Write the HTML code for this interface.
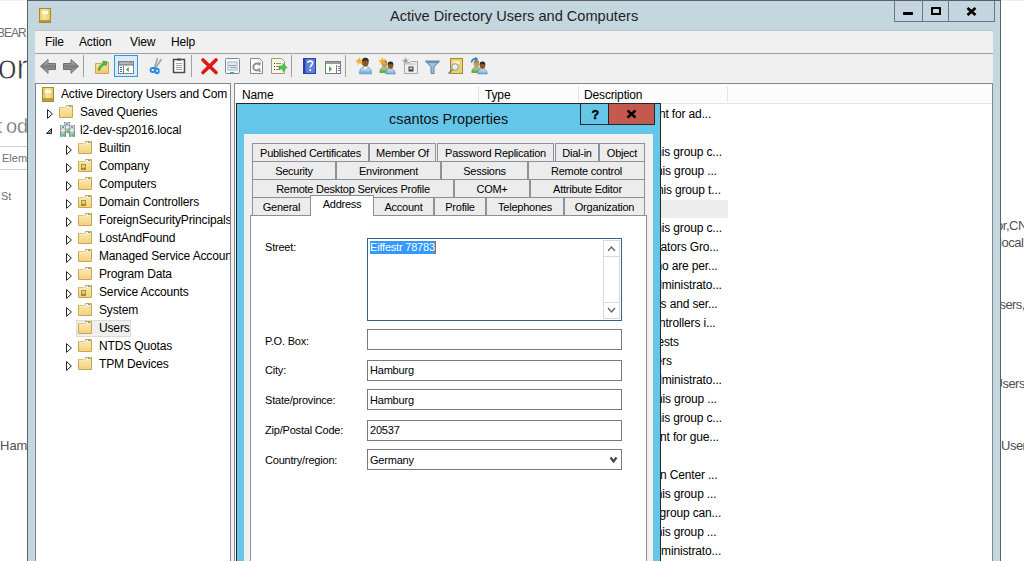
<!DOCTYPE html>
<html><head><meta charset="utf-8">
<style>
*{margin:0;padding:0;box-sizing:border-box}
html,body{width:1024px;height:561px;overflow:hidden;background:#fff;position:relative;font-family:"Liberation Sans",sans-serif}
.a{position:absolute}
.t{position:absolute;white-space:nowrap;line-height:1}
.tr{font-size:12px;color:#000;letter-spacing:-0.15px}
.dl{font-size:11px;color:#000;letter-spacing:-0.2px}
.tab{position:absolute;height:19px;background:#ececec;border:1px solid #8e9197;font-size:11px;letter-spacing:-0.25px;text-align:center;line-height:18px;color:#000}
.box{position:absolute;background:#fff;border:1px solid #7a7a7a}
.tri{position:absolute;width:0;height:0;border-top:4px solid transparent;border-bottom:4px solid transparent;border-left:5px solid #595959}
.tri:after{content:"";position:absolute;left:-4px;top:-2.5px;border-top:2.5px solid transparent;border-bottom:2.5px solid transparent;border-left:3px solid #fff}
.fold{position:absolute;width:14px;height:12px;background:linear-gradient(#fbe7a6,#f0cf73);border:1px solid #d3b05a;border-radius:1px}
.fold:before{content:"";position:absolute;left:-1px;top:-3px;width:6px;height:3px;background:#f3d98b;border:1px solid #d3b05a;border-bottom:none;border-radius:1px 1px 0 0}
</style></head><body>

<!-- background desktop app fragments -->
<div class="a" style="left:0;top:0;width:27px;height:1px;background:#f0f0f0"></div>
<div class="a" style="left:1001px;top:0;width:23px;height:1px;background:#eeeeee"></div>
<div class="t" style="left:-3px;top:27px;font-size:12px;letter-spacing:-1px;color:#6d6d6d">BEAR</div>
<div class="t" style="left:-2.5px;top:49px;font-size:35px;letter-spacing:-0.8px;color:#333;-webkit-text-stroke:0.9px #fff">or</div>
<div class="t" style="left:-3.5px;top:116px;font-size:20px;color:#1e73c8;-webkit-text-stroke:0.35px #fff">t</div>
<div class="t" style="left:6px;top:116px;font-size:20px;color:#666;-webkit-text-stroke:0.35px #fff">od</div>
<div class="a" style="left:0;top:146px;width:27px;height:1px;background:#cfcfcf"></div>
<div class="a" style="left:0;top:169px;width:27px;height:1px;background:#cfcfcf"></div>
<div class="t" style="left:2px;top:153px;font-size:11px;color:#707070">Elem</div>
<div class="t" style="left:1px;top:191px;font-size:11px;color:#707070">St</div>
<div class="t" style="left:0;top:439px;font-size:13px;color:#505050">Ham</div>
<div class="t" style="left:996.1px;top:219px;font-size:13px;letter-spacing:-0.5px;color:#505050">or,CN</div>
<div class="t" style="left:999.1px;top:236px;font-size:13px;letter-spacing:-0.5px;color:#505050">local</div>
<div class="t" style="left:990.8px;top:298px;font-size:13px;letter-spacing:-0.6px;color:#505050">Users,</div>
<div class="t" style="left:993.5px;top:377px;font-size:13px;letter-spacing:-0.5px;color:#505050">Users</div>
<div class="t" style="left:1001px;top:439px;font-size:13px;letter-spacing:-0.5px;color:#505050">User</div>

<!-- main window -->
<div class="a" style="left:27px;top:0;width:974px;height:561px;background:#c4d6de;border:1px solid #596168;border-bottom:none"></div>
<!-- title icon -->
<div class="a" style="left:39px;top:8px;width:12px;height:15px;background:linear-gradient(90deg,#e9cf63,#f7e8a3 50%,#e6c85a);border:1px solid #a88a2a"></div>
<div class="a" style="left:42px;top:11px;width:6px;height:3px;background:#fffbe0"></div>
<div class="a" style="left:40px;top:20px;width:10px;height:2px;background:#b89a3a"></div>
<div class="t" style="left:390px;top:9px;font-size:14.6px;color:#1f1f1f">Active Directory Users and Computers</div>
<!-- window buttons -->
<div class="a" style="left:894px;top:1px;width:101px;height:21px;border:1px solid #6b7780;border-top:none;background:#c3d5de"></div>
<div class="a" style="left:922px;top:0;width:1px;height:21px;background:#6b7780"></div>
<div class="a" style="left:948px;top:0;width:1px;height:21px;background:#6b7780"></div>
<div class="a" style="left:903px;top:12px;width:10px;height:3px;background:#000"></div>
<div class="a" style="left:931px;top:7px;width:10px;height:8px;border:2px solid #000;border-top-width:2px"></div>
<svg class="a" style="left:966px;top:7px" width="11" height="9"><path d="M1.5,1 L9.5,8 M9.5,1 L1.5,8" stroke="#000" stroke-width="2.7"/></svg>

<!-- menu bar -->
<div class="a" style="left:35px;top:30px;width:958px;height:24px;background:#f0f0f0;border-top:1px solid #b9c3c8;border-bottom:1px solid #a0a0a0"></div>
<div class="t tr" style="left:45px;top:36px">File</div>
<div class="t tr" style="left:79px;top:36px">Action</div>
<div class="t tr" style="left:130px;top:36px">View</div>
<div class="t tr" style="left:171px;top:36px">Help</div>

<!-- toolbar -->
<div class="a" style="left:35px;top:54px;width:958px;height:30px;background:#f0f0f0;border-bottom:1px solid #7a7a7a"></div>


<!-- toolbar icons -->
<div class="a" style="left:114px;top:55px;width:24px;height:22px;background:#dcebfb;border:1px solid #2a9de0"></div>
<svg class="a" style="left:0;top:0" width="500" height="84" viewBox="0 0 500 84">
<defs>
<linearGradient id="ga" x1="0" y1="0" x2="0" y2="1"><stop offset="0" stop-color="#c8c8c8"/><stop offset="0.5" stop-color="#7a7a7a"/><stop offset="1" stop-color="#b0b0b0"/></linearGradient>
<linearGradient id="gf" x1="0" y1="0" x2="0" y2="1"><stop offset="0" stop-color="#fbe6a4"/><stop offset="1" stop-color="#edc96a"/></linearGradient>
<linearGradient id="gp" x1="0" y1="0" x2="0" y2="1"><stop offset="0" stop-color="#d3e8f8"/><stop offset="1" stop-color="#6ea6d6"/></linearGradient>
<linearGradient id="gg" x1="0" y1="0" x2="0" y2="1"><stop offset="0" stop-color="#b4dc9c"/><stop offset="1" stop-color="#5a9e3a"/></linearGradient>
</defs>
<!-- separators -->
<rect x="83" y="55" width="1" height="22" fill="#a0a0a0"/>
<rect x="191" y="55" width="1" height="22" fill="#a0a0a0"/>
<rect x="291" y="55" width="1" height="22" fill="#a0a0a0"/>
<rect x="345" y="55" width="1" height="22" fill="#a0a0a0"/>
<!-- back/forward -->
<path d="M40.5,66.2 L48,59.5 V63.5 H55.5 V69.5 H48 V73.3 Z" fill="url(#ga)" stroke="#6e6e6e" stroke-width="1"/>
<path d="M78.5,66.2 L71,59.5 V63.5 H63.5 V69.5 H71 V73.3 Z" fill="url(#ga)" stroke="#6e6e6e" stroke-width="1"/>
<!-- up folder -->
<path d="M95.5,63.5 H101 L102,62 H108.5 V73.5 H95.5 Z" fill="url(#gf)" stroke="#cda656"/>
<path d="M98,70 C99,66 101,64 104,63 L103,61 L107,62 L106,66 L105,64.5 C102.5,65.5 100.5,67.5 99.5,70.5 Z" fill="#3fc43f" stroke="#2a9a2a" stroke-width="0.6"/>
<!-- console tree window -->
<rect x="118.5" y="61.5" width="15" height="12" fill="#fff" stroke="#7d8288"/>
<rect x="119" y="62" width="14" height="3" fill="#8a8f95"/>
<rect x="119.5" y="62.6" width="10" height="0.9" fill="#e8eaec"/>
<rect x="130.5" y="62.6" width="1" height="1" fill="#e8eaec"/><rect x="132" y="62.6" width="0.8" height="1" fill="#e8eaec"/>
<rect x="119" y="65" width="14" height="1" fill="#b8bcc0"/>
<rect x="123" y="66" width="1" height="7" fill="#7d8288"/>
<rect x="120" y="67" width="2" height="1" fill="#3a72c0"/><rect x="120" y="69" width="2" height="1" fill="#3a72c0"/><rect x="120" y="71" width="2" height="1" fill="#3a72c0"/>
<path d="M128.8,67 L126,69.5 L128.8,72 Z" fill="#3ab03a"/>
<!-- scissors -->
<path d="M157.5,58 L154.5,68 M161.5,59 L155.5,68" stroke="#9aa6b0" stroke-width="1.6"/>
<ellipse cx="153" cy="70" rx="2.5" ry="2" fill="none" stroke="#1e8ae6" stroke-width="1.8"/>
<ellipse cx="157" cy="71" rx="1.8" ry="2.3" fill="none" stroke="#1e8ae6" stroke-width="1.8"/>
<!-- clipboard -->
<rect x="173.5" y="59.5" width="11" height="13" fill="#fff" stroke="#4a4a4a" stroke-width="1.5"/>
<rect x="177" y="58.5" width="4" height="2" fill="#4a4a4a"/>
<path d="M176,63.5 H182 M176,65.5 H182 M176,67.5 H182 M176,69.5 H182" stroke="#9a9a9a" stroke-width="0.9"/>
<!-- red x -->
<path d="M203,60 L216,72.5 M216,60 L203,72.5" stroke="#e01818" stroke-width="3.6" stroke-linecap="round"/>
<!-- properties -->
<rect x="225.5" y="58.5" width="14" height="15" rx="1" fill="#f4f6f8" stroke="#7d8a96"/>
<rect x="228" y="62" width="9" height="8" fill="#e6ecf2" stroke="#9aa8b6" stroke-width="0.8"/>
<path d="M230,65.5 H236 M230,67.5 H236" stroke="#7d8a96" stroke-width="0.8"/>
<rect x="229" y="65" width="1" height="1" fill="#2a9ae6"/>
<rect x="230" y="72" width="4" height="1" fill="#2aaae6"/>
<!-- refresh page -->
<path d="M250.5,58.5 H259.5 L262.5,61.5 V73.5 H250.5 Z" fill="#fafafa" stroke="#8a8a8a"/>
<path d="M259.8,68.5 A3.4,3.4 0 1 1 258.6,64.2" fill="none" stroke="#8c8c8c" stroke-width="1.8"/><path d="M257.2,62.2 L261,62.8 L259.6,66.2 Z" fill="#8c8c8c"/><path d="M258,69.5 L260.5,72" stroke="#8c8c8c" stroke-width="1.4"/>
<!-- export list -->
<path d="M271.5,58.5 H281.5 L284.5,61.5 V73.5 H271.5 Z" fill="#fbf5dc" stroke="#9a9a8a"/>
<path d="M274,63.5 H275 M274,66.5 H275 M274,69.5 H275" stroke="#333" stroke-width="1"/>
<path d="M276,63.5 H281 M276,66.5 H280 M276,69.5 H280" stroke="#7a7ab0" stroke-width="0.9"/>
<path d="M279,66 H283 V63.5 L287,67.5 L283,71.5 V69 H279 Z" fill="#4cc84c" stroke="#2e9a2e" stroke-width="0.6"/>
<!-- help -->
<rect x="303" y="58" width="13" height="16" fill="#2445a8"/>
<rect x="305.5" y="59" width="9.5" height="14" fill="#5d7fd6"/>
<path d="M307.8,62.8 C307.8,60.6 312.6,60.4 312.6,63 C312.6,65 310.2,65.2 310.2,67.6" fill="none" stroke="#fff" stroke-width="1.6"/>
<rect x="309.4" y="69.3" width="1.7" height="1.8" fill="#fff"/>
<!-- action pane window -->
<rect x="325.5" y="61.5" width="15" height="12" fill="#fff" stroke="#7d7d7d"/>
<rect x="326" y="62" width="14" height="2" fill="#9a9a9a"/>
<rect x="336" y="65" width="1" height="8" fill="#7d7d7d"/>
<rect x="338" y="66" width="2" height="1" fill="#4a7ec8"/><rect x="338" y="68" width="2" height="1" fill="#4a7ec8"/><rect x="338" y="70" width="2" height="1" fill="#4a7ec8"/>
<path d="M329,66 L332,69 L329,72 Z" fill="#3ab03a"/>
<!-- new user -->
<path d="M359.5,73.8 C359.5,68.5 362,66.8 365.5,66.8 C369,66.8 371.5,68.5 371.5,73.8 Z" fill="url(#gp)" stroke="#5a8cbc" stroke-width="0.7"/>
<path d="M364,67 L365.5,70 L367,67 Z" fill="#fff"/>
<ellipse cx="365.3" cy="62.6" rx="3.3" ry="3.9" fill="#8a5628"/>
<path d="M361.9,62 C361.5,58.5 363.5,57.8 365.5,57.8 C368,57.8 369.2,59.5 368.7,62 C367.5,60 364,60 361.9,62 Z" fill="#2b2b2b"/>
<g transform="translate(359.3,61.2)"><path d="M0,-3.6 L0.9,-1.2 L3.4,-1.6 L1.5,0.3 L2.8,2.7 L0.3,1.6 L-1.6,3.3 L-1.3,0.8 L-3.6,-0.3 L-1.2,-1 Z" fill="#f8a81c" stroke="#f3b040" stroke-width="0.6"/></g>
<!-- new group -->
<path d="M379.8,72.5 C379.8,68.5 382,67.2 384.5,67.2 C387,67.2 389,68.5 389,72.5 Z" fill="url(#gg)" stroke="#4f8a36" stroke-width="0.6"/>
<ellipse cx="384.4" cy="64" rx="2.7" ry="3.2" fill="#c49866"/>
<path d="M381.8,63.3 C381.6,60.5 383,60 384.5,60 C386.2,60 387.3,61 387.1,63.3 C386,62 383,62 381.8,63.3 Z" fill="#a08040"/>
<path d="M385.8,74 C385.8,70 388,68.8 390.5,68.8 C393,68.8 395.2,70 395.2,74 Z" fill="url(#gp)" stroke="#5a8cbc" stroke-width="0.6"/>
<ellipse cx="390.5" cy="65.6" rx="2.8" ry="3.3" fill="#8a5628"/>
<path d="M387.7,65 C387.5,62 389,61.5 390.6,61.5 C392.4,61.5 393.5,62.5 393.3,65 C392,63.6 389,63.6 387.7,65 Z" fill="#2b2b2b"/>
<g transform="translate(382.3,61.2)"><path d="M0,-3.6 L0.9,-1.2 L3.4,-1.6 L1.5,0.3 L2.8,2.7 L0.3,1.6 L-1.6,3.3 L-1.3,0.8 L-3.6,-0.3 L-1.2,-1 Z" fill="#f8a81c" stroke="#f3b040" stroke-width="0.6"/></g>
<!-- new OU -->
<path d="M404.5,62.5 H410 L411,61.5 H417.5 V73.5 H404.5 Z" fill="#efefef" stroke="#a8a8a8"/>
<rect x="405" y="63" width="12" height="2" fill="#d8d8d8"/>
<rect x="408.5" y="66.5" width="5" height="5" fill="#3c3c3c"/>
<rect x="409.5" y="67.5" width="3" height="2" fill="#d0d0d0"/>
<g transform="translate(405.5,61)"><path d="M0,-3.4 L0.8,-1.1 L3.2,-1.5 L1.4,0.3 L2.6,2.5 L0.3,1.5 L-1.5,3.1 L-1.2,0.7 L-3.4,-0.3 L-1.1,-0.9 Z" fill="#9a9a9a" stroke="#bcbcbc" stroke-width="0.6"/></g>
<!-- filter -->
<path d="M425.5,61 H439.5 L434,67 V73.5 H431 V67 Z" fill="#9cc0da" stroke="#5a7a96" stroke-width="0.9"/>
<rect x="426" y="61" width="13" height="2" fill="#6f8fab"/>
<!-- find -->
<rect x="450.5" y="58.5" width="12" height="15" fill="#e8d078" stroke="#a88a20"/>
<rect x="453" y="61" width="7" height="3" fill="#f8eeb8"/>
<circle cx="455" cy="67" r="3.3" fill="#e4f0f8" stroke="#8a98a0" stroke-width="1"/>
<path d="M452.5,69.5 L448.5,73.5" stroke="#7a7a7a" stroke-width="1.6"/>
<!-- add to group -->
<path d="M471.5,62.5 Q472,58.8 475.8,58.8" fill="none" stroke="#1f78d4" stroke-width="1.6"/>
<path d="M475,56.8 L478.3,58.9 L475.1,61.2 Z" fill="#1f78d4"/>
<path d="M471.8,72.5 C471.8,68.5 474,67.2 476.5,67.2 C479,67.2 481,68.5 481,72.5 Z" fill="url(#gg)" stroke="#4f8a36" stroke-width="0.6"/>
<ellipse cx="476.4" cy="64" rx="2.7" ry="3.2" fill="#c49866"/>
<path d="M473.8,63.3 C473.6,60.5 475,60 476.5,60 C478.2,60 479.3,61 479.1,63.3 C478,62 475,62 473.8,63.3 Z" fill="#a08040"/>
<path d="M477.8,74 C477.8,70 480,68.8 482.5,68.8 C485,68.8 487.2,70 487.2,74 Z" fill="url(#gp)" stroke="#5a8cbc" stroke-width="0.6"/>
<ellipse cx="482.5" cy="65.6" rx="2.8" ry="3.3" fill="#8a5628"/>
<path d="M479.7,65 C479.5,62 481,61.5 482.6,61.5 C484.4,61.5 485.5,62.5 485.3,65 C484,63.6 481,63.6 479.7,65 Z" fill="#2b2b2b"/>
</svg>
<!-- tree pane -->
<div class="a" style="left:35px;top:83px;width:196px;height:478px;background:#fff;border:1px solid #828790;border-bottom:none"></div>

<!-- tree content -->
<svg width="0" height="0" style="position:absolute">
<defs>
<linearGradient id="gfold" x1="0" y1="0" x2="0" y2="1"><stop offset="0" stop-color="#fcebb2"/><stop offset="1" stop-color="#f2d27c"/></linearGradient>
<symbol id="fold" viewBox="0 0 14 13">
<path d="M0.5,2.5 H6.5 L7.5,1.5 V0.5 H13.5 V12.5 H0.5 Z" fill="url(#gfold)" stroke="#caa552"/>
<path d="M1,3 H7 L8,2 H13" stroke="#fff3d0" stroke-width="0.8" fill="none"/>
<path d="M8.5,1.5 H10" stroke="#ffffff" stroke-width="1"/>
<path d="M10,1.5 H12.5" stroke="#5aa0e0" stroke-width="1"/>
</symbol>
<symbol id="ou" viewBox="0 0 14 13">
<path d="M0.5,2.5 H6.5 L7.5,1.5 V0.5 H13.5 V12.5 H0.5 Z" fill="url(#gfold)" stroke="#caa552"/>
<path d="M1,3 H7 L8,2 H13" stroke="#fff3d0" stroke-width="0.8" fill="none"/>
<path d="M8.5,1.5 H10" stroke="#ffffff" stroke-width="1"/>
<path d="M10,1.5 H12.5" stroke="#5aa0e0" stroke-width="1"/>
<rect x="3" y="5" width="5" height="6" fill="#a8862a"/>
<rect x="3.8" y="5.8" width="3.4" height="3" fill="#e0d080"/>
</symbol>
<symbol id="tri" viewBox="0 0 6 10">
<path d="M0.5,0.6 L5.4,5 L0.5,9.4 Z" fill="#fff" stroke="#262626" stroke-width="1" stroke-linejoin="miter"/>
</symbol>
</defs>
</svg>
<div class="a" style="left:42px;top:87px;width:12px;height:15px;background:linear-gradient(90deg,#e4c458,#f8eaa8 45%,#e8cc60);border:1px solid #a98a2b"></div>
<div class="a" style="left:45px;top:90px;width:6px;height:3px;background:#fffbe2"></div>
<div class="a" style="left:43px;top:98px;width:10px;height:3px;background:#bb9c40"></div>
<div class="t tr" style="left:61px;top:88px">Active Directory Users and Com</div>
<svg class="a" style="left:47px;top:108.5px" width="6" height="10"><use href="#tri"/></svg>
<svg class="a" style="left:59px;top:105px" width="14" height="13"><use href="#fold"/></svg>
<div class="t tr" style="left:80px;top:106px">Saved Queries</div>
<svg class="a" style="left:46px;top:128px" width="6" height="6"><path d="M5.5,0.5 V5.5 H0.5 Z" fill="#9a9a9a" stroke="#262626" stroke-width="1"/></svg>
<svg class="a" style="left:59px;top:122px" width="17" height="16" viewBox="0 0 17 16">
<defs><linearGradient id="gsv" x1="0" y1="0" x2="1" y2="0"><stop offset="0" stop-color="#7c8690"/><stop offset="0.5" stop-color="#cdd3da"/><stop offset="1" stop-color="#78828c"/></linearGradient></defs>
<rect x="5" y="0" width="6" height="11.5" fill="url(#gsv)"/>
<rect x="5.8" y="1" width="4.4" height="2.4" fill="#f4f6f8"/><rect x="6.8" y="1.6" width="2.4" height="1" fill="#1f3a48"/>
<rect x="5.8" y="4.5" width="4.4" height="1.8" fill="#f4f6f8"/>
<rect x="7.5" y="8.3" width="2.2" height="2.2" fill="#2ee62e"/>
<rect x="1" y="3" width="6" height="12" fill="url(#gsv)"/>
<rect x="1.8" y="4" width="4.4" height="2.4" fill="#f4f6f8"/><rect x="2.8" y="4.6" width="2.4" height="1" fill="#1f3a48"/>
<rect x="1.8" y="7.5" width="4.4" height="1.8" fill="#f4f6f8"/>
<rect x="3.5" y="12" width="2.2" height="2.2" fill="#2ee62e"/>
<rect x="10" y="3" width="6" height="12" fill="url(#gsv)"/>
<rect x="10.8" y="4" width="4.4" height="2.4" fill="#f4f6f8"/><rect x="11.8" y="4.6" width="2.4" height="1" fill="#1f3a48"/>
<rect x="10.8" y="7.5" width="4.4" height="1.8" fill="#f4f6f8"/>
<rect x="12.5" y="12" width="2.2" height="2.2" fill="#2ee62e"/>
</svg>
<div class="t tr" style="left:80px;top:124px">l2-dev-sp2016.local</div>
<svg class="a" style="left:66px;top:145px" width="6" height="10"><use href="#tri"/></svg>
<svg class="a" style="left:78px;top:141px" width="14" height="13"><use href="#fold"/></svg>
<div class="t tr" style="left:99px;top:142px">Builtin</div>
<svg class="a" style="left:66px;top:163px" width="6" height="10"><use href="#tri"/></svg>
<svg class="a" style="left:78px;top:159px" width="14" height="13"><use href="#ou"/></svg>
<div class="t tr" style="left:99px;top:160px">Company</div>
<svg class="a" style="left:66px;top:181px" width="6" height="10"><use href="#tri"/></svg>
<svg class="a" style="left:78px;top:177px" width="14" height="13"><use href="#fold"/></svg>
<div class="t tr" style="left:99px;top:178px">Computers</div>
<svg class="a" style="left:66px;top:199px" width="6" height="10"><use href="#tri"/></svg>
<svg class="a" style="left:78px;top:195px" width="14" height="13"><use href="#ou"/></svg>
<div class="t tr" style="left:99px;top:196px">Domain Controllers</div>
<svg class="a" style="left:66px;top:217px" width="6" height="10"><use href="#tri"/></svg>
<svg class="a" style="left:78px;top:213px" width="14" height="13"><use href="#fold"/></svg>
<div class="t tr" style="left:99px;top:214px">ForeignSecurityPrincipals</div>
<svg class="a" style="left:66px;top:235px" width="6" height="10"><use href="#tri"/></svg>
<svg class="a" style="left:78px;top:231px" width="14" height="13"><use href="#fold"/></svg>
<div class="t tr" style="left:99px;top:232px">LostAndFound</div>
<svg class="a" style="left:66px;top:253px" width="6" height="10"><use href="#tri"/></svg>
<svg class="a" style="left:78px;top:249px" width="14" height="13"><use href="#fold"/></svg>
<div class="t tr" style="left:99px;top:250px">Managed Service Accounts</div>
<svg class="a" style="left:66px;top:271px" width="6" height="10"><use href="#tri"/></svg>
<svg class="a" style="left:78px;top:267px" width="14" height="13"><use href="#fold"/></svg>
<div class="t tr" style="left:99px;top:268px">Program Data</div>
<svg class="a" style="left:66px;top:289px" width="6" height="10"><use href="#tri"/></svg>
<svg class="a" style="left:78px;top:285px" width="14" height="13"><use href="#ou"/></svg>
<div class="t tr" style="left:99px;top:286px">Service Accounts</div>
<svg class="a" style="left:66px;top:307px" width="6" height="10"><use href="#tri"/></svg>
<svg class="a" style="left:78px;top:303px" width="14" height="13"><use href="#fold"/></svg>
<div class="t tr" style="left:99px;top:304px">System</div>
<div class="a" style="left:76px;top:320px;width:55px;height:17px;background:#efefef;border:1px solid #dadada"></div>
<svg class="a" style="left:78px;top:321px" width="14" height="13"><use href="#fold"/></svg>
<div class="t tr" style="left:99px;top:322px">Users</div>
<svg class="a" style="left:66px;top:343px" width="6" height="10"><use href="#tri"/></svg>
<svg class="a" style="left:78px;top:339px" width="14" height="13"><use href="#fold"/></svg>
<div class="t tr" style="left:99px;top:340px">NTDS Quotas</div>
<svg class="a" style="left:66px;top:361px" width="6" height="10"><use href="#tri"/></svg>
<svg class="a" style="left:78px;top:357px" width="14" height="13"><use href="#fold"/></svg>
<div class="t tr" style="left:99px;top:358px">TPM Devices</div>
<div class="a" style="left:230px;top:84px;width:1px;height:477px;background:#828790"></div>
<!-- list pane -->
<div class="a" style="left:231px;top:83px;width:3px;height:478px;background:#f0f0f0"></div>
<div class="a" style="left:234px;top:83px;width:759px;height:478px;background:#fff;border:1px solid #828790;border-bottom:none"></div>
<div class="a" style="left:235px;top:84px;width:757px;height:20px;background:#fcfcfc;border-bottom:1px solid #e5e5e5"></div>
<div class="a" style="left:478px;top:86px;width:1px;height:16px;background:#e5e5e5"></div>
<div class="a" style="left:578px;top:86px;width:1px;height:16px;background:#e5e5e5"></div>
<div class="a" style="left:727px;top:86px;width:1px;height:16px;background:#e5e5e5"></div>
<div class="t tr" style="left:242px;top:89px">Name</div>
<div class="t tr" style="left:485px;top:89px">Type</div>
<div class="t tr" style="left:584px;top:89px">Description</div>


<!-- list rows -->
<div class="t tr" style="right:312.8px;top:108.0px">Built-in account for ad...</div>
<div class="t tr" style="right:302.2px;top:146.0px">Members in this group c...</div>
<div class="t tr" style="right:307.2px;top:165.0px">Members of this group ...</div>
<div class="t tr" style="right:303.2px;top:184.0px">Members of this group t...</div>
<div class="a" style="left:578px;top:199.5px;width:150px;height:18px;background:#ececec"></div>
<div class="t tr" style="right:302.2px;top:222.0px">Members in this group c...</div>
<div class="t tr" style="right:305.2px;top:241.0px">DNS Administrators Gro...</div>
<div class="t tr" style="right:306.5px;top:260.0px">DNS clients who are per...</div>
<div class="t tr" style="right:302.2px;top:279.0px">Designated administrato...</div>
<div class="t tr" style="right:306.5px;top:298.0px">All workstations and ser...</div>
<div class="t tr" style="right:308.5px;top:317.0px">All domain controllers i...</div>
<div class="t tr" style="right:345.2px;top:336.0px">All domain guests</div>
<div class="t tr" style="right:352.2px;top:355.0px">All domain users</div>
<div class="t tr" style="right:302.2px;top:374.0px">Designated administrato...</div>
<div class="t tr" style="right:307.2px;top:393.0px">Members of this group ...</div>
<div class="t tr" style="right:302.2px;top:412.0px">Members in this group c...</div>
<div class="t tr" style="right:305.2px;top:431.0px">Built-in account for gue...</div>
<div class="t tr" style="right:306.5px;top:469.0px">Key Distribution Center ...</div>
<div class="t tr" style="right:307.6px;top:488.0px">Members of this group ...</div>
<div class="t tr" style="right:302.9px;top:507.0px">Servers in this group can...</div>
<div class="t tr" style="right:307.6px;top:526.0px">Members of this group ...</div>
<div class="t tr" style="right:302.9px;top:545.0px">Designated administrato...</div>
<!-- dialog -->
<div class="a" style="left:236px;top:103px;width:425px;height:460px;background:#64c7e9;border:1px solid #2a2626"></div>
<div class="t" style="left:389px;top:112px;font-size:14.4px;color:#111">csantos Properties</div>
<div class="a" style="left:244px;top:134px;width:409px;height:430px;background:#f0f0f0"></div>

<!-- tabs -->
<div class="tab" style="left:252px;top:143px;width:117px">Published Certificates</div>
<div class="tab" style="left:369px;top:143px;width:67px">Member Of</div>
<div class="tab" style="left:437px;top:143px;width:117px">Password Replication</div>
<div class="tab" style="left:555px;top:143px;width:44px">Dial-in</div>
<div class="tab" style="left:599px;top:143px;width:46px">Object</div>
<div class="tab" style="left:252px;top:161px;width:84px">Security</div>
<div class="tab" style="left:336px;top:161px;width:105px">Environment</div>
<div class="tab" style="left:441px;top:161px;width:87px">Sessions</div>
<div class="tab" style="left:528px;top:161px;width:117px">Remote control</div>
<div class="tab" style="left:252px;top:179px;width:202px">Remote Desktop Services Profile</div>
<div class="tab" style="left:454px;top:179px;width:76px">COM+</div>
<div class="tab" style="left:530px;top:179px;width:115px">Attribute Editor</div>
<div class="tab" style="left:252px;top:197px;width:59px">General</div>
<div class="tab" style="left:373px;top:197px;width:61px">Account</div>
<div class="tab" style="left:434px;top:197px;width:52px">Profile</div>
<div class="tab" style="left:486px;top:197px;width:78px">Telephones</div>
<div class="tab" style="left:564px;top:197px;width:81px">Organization</div>
<div class="a" style="left:250px;top:215px;width:397px;height:350px;background:#fff;border:1px solid #8c8f96"></div>
<div class="a" style="left:310px;top:195px;width:64px;height:21px;background:#fff;border:1px solid #8c8f96;border-bottom:none;font-size:11px;letter-spacing:-0.25px;text-align:center;line-height:17px">Address</div>
<div class="t dl" style="left:265px;top:242px">Street:</div>
<div class="t dl" style="left:265px;top:336px">P.O. Box:</div>
<div class="t dl" style="left:265px;top:365px">City:</div>
<div class="t dl" style="left:265px;top:395px">State/province:</div>
<div class="t dl" style="left:265px;top:425px">Zip/Postal Code:</div>
<div class="t dl" style="left:265px;top:455px">Country/region:</div>
<div class="box" style="left:367px;top:238px;width:255px;height:83px;border-color:#2d6392"></div>
<div class="a" style="left:370px;top:241px;width:66px;height:13px;background:#3399ff"></div>
<div class="t dl" style="left:370px;top:242px;color:#fff">Eiffestr 78783</div>
<div class="a" style="left:435px;top:241px;width:1px;height:13px;background:#c86400"></div>
<div class="a" style="left:603px;top:240px;width:17px;height:79px;border:1px solid #d9d9d9;background:#fff"></div>
<div class="a" style="left:603px;top:240px;width:17px;height:17px;border:1px solid #d9d9d9"></div>
<div class="a" style="left:603px;top:302px;width:17px;height:17px;border:1px solid #d9d9d9"></div>
<svg class="a" style="left:607px;top:245px" width="9" height="8"><path d="M1,6 L4.5,2 L8,6" fill="none" stroke="#606060" stroke-width="1.2"/></svg>
<svg class="a" style="left:607px;top:306px" width="9" height="8"><path d="M1,2 L4.5,6 L8,2" fill="none" stroke="#606060" stroke-width="1.2"/></svg>
<div class="box" style="left:367px;top:329px;width:255px;height:21px"></div>
<div class="box" style="left:367px;top:360px;width:255px;height:21px"></div>
<div class="t dl" style="left:370px;top:365px">Hamburg</div>
<div class="box" style="left:367px;top:389px;width:255px;height:21px"></div>
<div class="t dl" style="left:370px;top:395px">Hamburg</div>
<div class="box" style="left:367px;top:420px;width:255px;height:21px"></div>
<div class="t dl" style="left:370px;top:425px">20537</div>
<div class="box" style="left:367px;top:449px;width:255px;height:21px"></div>
<div class="t dl" style="left:370px;top:455px">Germany</div>
<svg class="a" style="left:609px;top:456px" width="10" height="8"><path d="M1.5,1.5 L4.5,5.5 L7.5,1.5" fill="none" stroke="#444" stroke-width="2.2"/></svg>
<div class="a" style="left:580px;top:103px;width:29px;height:22px;border:1px solid #262626;background:#64c7e9"></div>
<div class="a" style="left:608px;top:103px;width:47px;height:22px;border:1px solid #262626;background:#c45a4f"></div>
<div class="t" style="left:591.5px;top:109px;font-size:12.5px;font-weight:bold;color:#000;-webkit-text-stroke:0.4px #000">?</div>
<svg class="a" style="left:626px;top:109px" width="11" height="10"><path d="M1.5,1.5 L9.5,8.5 M9.5,1.5 L1.5,8.5" stroke="#000" stroke-width="2.4"/></svg>

</body></html>
